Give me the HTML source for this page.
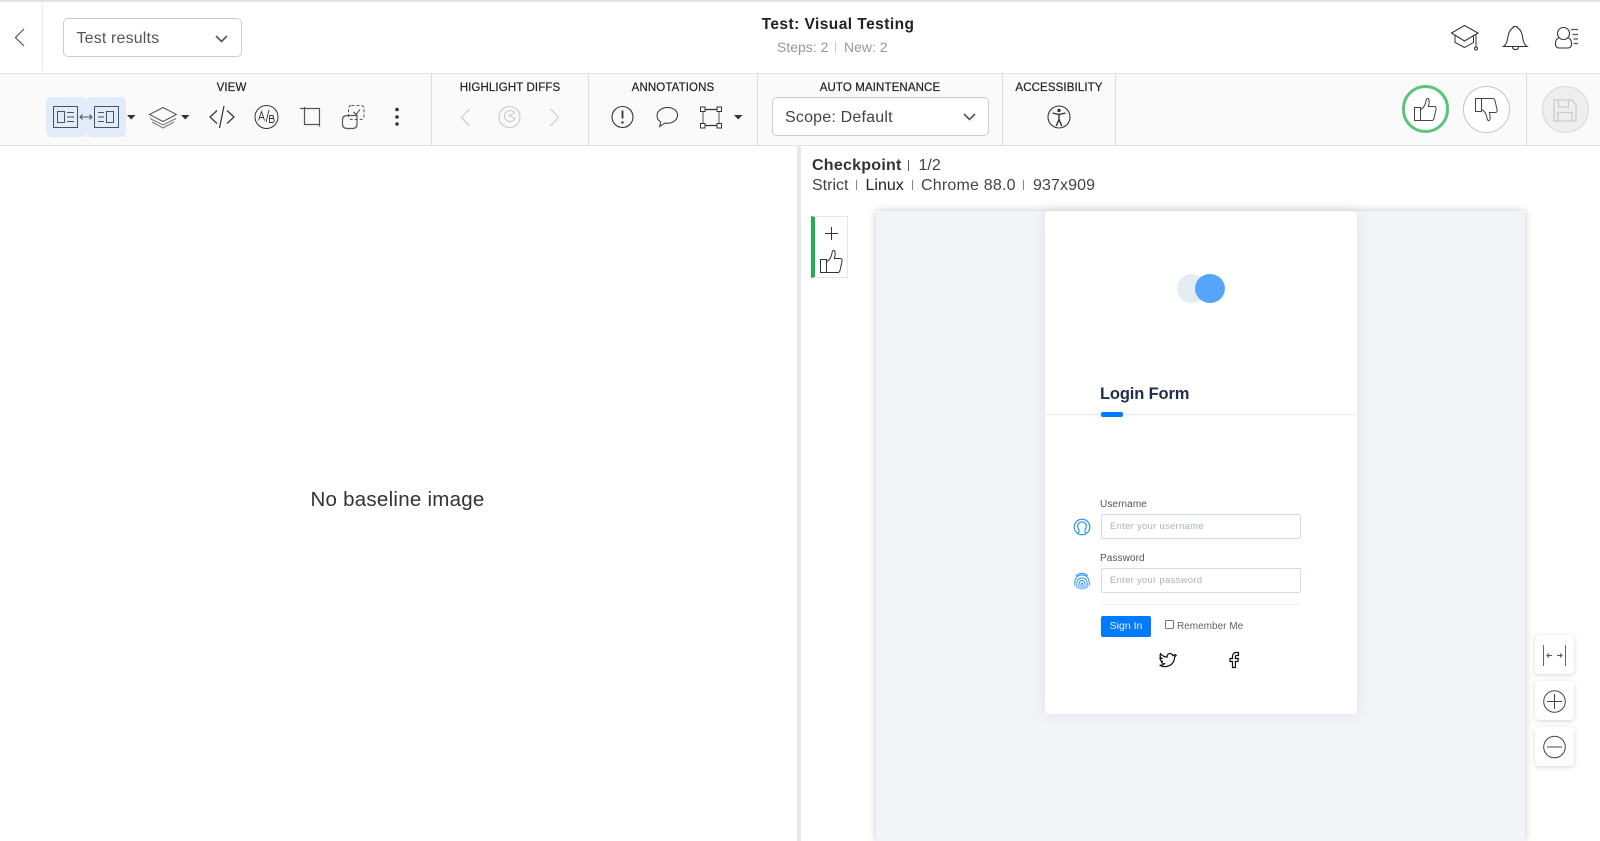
<!DOCTYPE html>
<html>
<head>
<meta charset="utf-8">
<style>
html,body{margin:0;padding:0;width:1600px;height:841px;overflow:hidden;background:#fff;font-family:"Liberation Sans",sans-serif}
.a{position:absolute}
.t{position:absolute;white-space:nowrap;line-height:1}
.c{transform:translateX(-50%)}
.lab{font-size:11.5px;color:#222;top:82.5px;letter-spacing:.12px;-webkit-text-stroke:.2px #222}
svg{position:absolute;left:0;top:0}
.sep{position:absolute;width:1px;background:#ddd}
</style>
</head>
<body>
<!-- chrome backgrounds -->
<div class="a" style="left:0;top:0;width:1600px;height:2px;background:#e3e3e3"></div>
<div class="a" style="left:0;top:73px;width:1600px;height:72px;background:#fafafa;border-top:1px solid #e2e2e2;border-bottom:1px solid #e2e2e2;box-sizing:border-box;height:73px"></div>
<div class="sep" style="left:42px;top:3px;height:68px;background:#eaeaea"></div>
<div class="sep" style="left:431px;top:74px;height:71px"></div>
<div class="sep" style="left:588px;top:74px;height:71px"></div>
<div class="sep" style="left:757px;top:74px;height:71px"></div>
<div class="sep" style="left:1002px;top:74px;height:71px"></div>
<div class="sep" style="left:1115px;top:74px;height:71px"></div>
<div class="sep" style="left:1526px;top:74px;height:71px"></div>

<!-- select -->
<div class="a" style="left:63px;top:18px;width:179px;height:39px;box-sizing:border-box;border:1px solid #ccc;border-radius:5px;background:#fff"></div>
<div class="t" style="left:76.500px;top:30.500px;font-size:16px;color:#555;letter-spacing:.15px">Test results</div>

<!-- title -->
<div class="t c" style="left:838px;top:17px;font-size:15.500px;font-weight:bold;color:#222;letter-spacing:.45px">Test: Visual Testing</div>
<div class="t" style="left:777px;top:40px;font-size:14px;color:#999">Steps: 2</div>
<div class="a" style="left:835px;top:42px;width:1px;height:11px;background:#ccc"></div>
<div class="t" style="left:844px;top:40px;font-size:14px;color:#999">New: 2</div>

<!-- toolbar labels -->
<div class="t c lab" style="left:231.500px">VIEW</div>
<div class="t c lab" style="left:510px">HIGHLIGHT DIFFS</div>
<div class="t c lab" style="left:673px">ANNOTATIONS</div>
<div class="t c lab" style="left:880px">AUTO MAINTENANCE</div>
<div class="t c lab" style="left:1059px">ACCESSIBILITY</div>

<!-- highlight backgrounds -->
<div class="a" style="left:46px;top:97px;width:40px;height:40px;background:#e1ebfa;border-radius:5px"></div>
<div class="a" style="left:86px;top:97px;width:40px;height:40px;background:#e1ebfa;border-radius:5px"></div>

<!-- scope select -->
<div class="a" style="left:772px;top:97px;width:217px;height:39px;box-sizing:border-box;border:1px solid #ccc;border-radius:5px;background:#fff"></div>
<div class="t" style="left:785px;top:109.500px;font-size:16px;color:#444;letter-spacing:.2px">Scope: Default</div>

<!-- buttons -->
<div class="a" style="left:1401.500px;top:85px;width:47.500px;height:47.500px;box-sizing:border-box;border:3.500px solid #5cc47c;border-radius:50%;background:#fff"></div>
<div class="a" style="left:1463px;top:86px;width:47px;height:47px;box-sizing:border-box;border:1.500px solid #c4c4c4;border-radius:50%;background:#fff"></div>
<div class="a" style="left:1541.500px;top:86px;width:47px;height:47px;box-sizing:border-box;border:1.500px solid #d8d8d8;border-radius:50%;background:#eee"></div>

<!-- left pane -->
<div class="a" style="left:797px;top:145px;width:4px;height:696px;background:#e8e8e8"></div>
<div class="t c" style="left:397.500px;top:490px;font-size:20.500px;color:#333;letter-spacing:.25px">No baseline image</div>

<!-- checkpoint info -->
<div class="t" style="left:812px;top:158px;font-size:16px;font-weight:bold;color:#333;letter-spacing:.25px">Checkpoint</div>
<div class="a" style="left:908px;top:160px;width:1px;height:11px;background:#555"></div>
<div class="t" style="left:918.500px;top:158px;font-size:16px;color:#444">1/2</div>
<div class="t" style="left:812px;top:177.500px;font-size:16px;color:#444">Strict</div>
<div class="a" style="left:856px;top:180px;width:1px;height:10px;background:#888"></div>
<div class="t" style="left:865.500px;top:177.500px;font-size:16px;color:#222">Linux</div>
<div class="a" style="left:912px;top:180px;width:1px;height:10px;background:#888"></div>
<div class="t" style="left:921px;top:177.500px;font-size:16px;color:#444;letter-spacing:.2px">Chrome 88.0</div>
<div class="a" style="left:1023px;top:180px;width:1px;height:10px;background:#888"></div>
<div class="t" style="left:1033px;top:177.500px;font-size:16px;color:#444;letter-spacing:.1px">937x909</div>

<!-- side widget -->
<div class="a" style="left:811px;top:216px;width:37px;height:62px;box-sizing:border-box;border:1px solid #e5e5e5;border-left:4.500px solid #1fb350;background:#fff"></div>

<!-- screenshot -->
<div class="a" style="left:876px;top:211px;width:649px;height:630px;background:#f2f4f8;box-shadow:0 0 8px rgba(0,0,0,.22)"></div>
<div class="a" style="left:1045px;top:211px;width:312px;height:503px;background:#fff;border-radius:4px;box-shadow:0 0 14px rgba(60,70,100,.1)"></div>
<div class="a" style="left:1177px;top:274px;width:29px;height:29px;border-radius:50%;background:#e6ecf4"></div>
<div class="a" style="left:1195px;top:274px;width:30px;height:29px;border-radius:50%;background:#55a5fb"></div>
<div class="t" style="left:1100px;top:386px;font-size:16.500px;font-weight:bold;color:#1e3048;letter-spacing:-.15px">Login Form</div>
<div class="a" style="left:1045px;top:414px;width:312px;height:1px;background:#e8ebef"></div>
<div class="a" style="left:1100.500px;top:412px;width:22.500px;height:5px;background:#007bff;border-radius:2px"></div>

<div class="t" style="left:1100px;top:499.500px;font-size:10px;color:#4d5562;letter-spacing:.1px">Username</div>
<div class="a" style="left:1100.500px;top:514px;width:200px;height:25px;box-sizing:border-box;border:1px solid #d3dbe8;border-radius:2px;background:#fff"></div>
<div class="t" style="left:1110px;top:521.500px;font-size:9.500px;color:#aeb2b8;letter-spacing:.27px">Enter your username</div>
<div class="t" style="left:1100px;top:553.500px;font-size:10px;color:#4d5562;letter-spacing:.1px">Password</div>
<div class="a" style="left:1100.500px;top:568px;width:200px;height:25px;box-sizing:border-box;border:1px solid #d3dbe8;border-radius:2px;background:#fff"></div>
<div class="t" style="left:1110px;top:575.500px;font-size:9.500px;color:#aeb2b8;letter-spacing:.27px">Enter your password</div>
<div class="a" style="left:1100.500px;top:604px;width:200px;height:1px;background:#f0f0f2"></div>
<div class="a" style="left:1100.500px;top:616px;width:50.500px;height:20.500px;background:#007bff;border-radius:2px"></div>
<div class="t c" style="left:1126px;top:620.500px;font-size:10.500px;color:#e8f2ff">Sign In</div>
<div class="a" style="left:1165px;top:620px;width:9px;height:9px;box-sizing:border-box;border:1px solid #777;border-radius:1.500px;background:#fff"></div>
<div class="t" style="left:1177px;top:621.500px;font-size:10px;color:#5d6570">Remember Me</div>

<!-- zoom buttons -->
<div class="a" style="left:1535px;top:635px;width:39px;height:39px;background:#fff;border-radius:4px;box-shadow:0 1px 5px rgba(0,0,0,.18)"></div>
<div class="a" style="left:1535px;top:681px;width:39px;height:39px;background:#fff;border-radius:4px;box-shadow:0 1px 5px rgba(0,0,0,.18)"></div>
<div class="a" style="left:1535px;top:727px;width:39px;height:39px;background:#fff;border-radius:4px;box-shadow:0 1px 5px rgba(0,0,0,.18)"></div>

<!-- icons overlay -->
<svg width="1600" height="841" viewBox="0 0 1600 841" fill="none" stroke="#333" stroke-width="1">
<defs>
<g id="th">
<rect x="0.500" y="9.500" width="6" height="13"/>
<path d="M6.500 11.500c3-1 5-5 5.500-8.500 .2-1.800 1-3 2-2.500 1.600.8 1.300 5 .3 8h6c1.400 0 2 1 1.800 2.500l-2 9c-.3 1.300-1 2.500-2.100 2.500H6.500"/>
</g>
</defs>
<!-- back -->
<path d="M24 29 15.500 37.500 24 46" stroke="#555" stroke-width="1.200"/>
<!-- selects arrows -->
<path d="M216 36 221.500 41.500 227 36" stroke="#555" stroke-width="1.600"/>
<path d="M964 114 969.500 119.500 975 114" stroke="#555" stroke-width="1.600"/>

<!-- view icons -->
<g stroke="#4a535d">
<rect x="53.500" y="106.500" width="24" height="21"/>
<rect x="57.500" y="111.500" width="7" height="11"/>
<path d="M67 112.500h7M67 117h7M67 121.500h7"/>
<rect x="94.500" y="106.500" width="24" height="21"/>
<rect x="106.500" y="111.500" width="7" height="11"/>
<path d="M98 112.500h6M98 117h6M98 121.500h6"/>
<path d="M80 117h12M82.500 114.500 80 117l2.500 2.500M89.500 114.500 92 117l-2.500 2.500"/>
</g>
<g fill="#333" stroke="none">
<path d="M127 115h8.500l-4.250 4.500z"/>
<path d="M181 115h8.500l-4.250 4.500z"/>
<path d="M734 115h8.500l-4.250 4.500z"/>
<circle cx="397" cy="109.500" r="1.800"/><circle cx="397" cy="117" r="1.800"/><circle cx="397" cy="124" r="1.800"/>
</g>
<path d="M163 107.500 176.500 114.500 163 121.500 149.500 114.500Z" stroke="#555"/>
<path d="M150 118.500 163 125 176 118.500M152 122 163 128 174 122" stroke="#777"/>
<path d="M217 110.500 210 117l7 6.500M227 110.500 234 117l-7 6.500M224 106 219.500 128" stroke-width="1.200"/>
<circle cx="266.500" cy="117" r="11.500"/>
<path d="M258.500 120.500 261.500 111.500 264.500 120.500M259.500 117.500h4M266 122 269 110" stroke-width=".9"/>
<path d="M269.500 115.500h2.500c2 0 2 3 0 3h-2.500v-3M269.500 118.500h3c2.300 0 2.300 4 0 4h-3z" stroke-width=".9"/>
<path d="M300 108.500h4.500M304.500 107v17.500H320M304.500 108.500H319.500V124.500M319.500 124.500v2" stroke="#555" stroke-width="1.200"/>
<path d="M356 115.500h-8.500c-3 0-5 1.500-5 4.500v4c0 3 2 4.500 5 4.500h5c3 0 4.500-1.500 4.500-4.500v-8.500z" stroke="#555" stroke-width="1.200"/>
<rect x="348.500" y="105.500" width="15.500" height="14" rx="3" stroke="#555" stroke-dasharray="3 2"/>
<path d="M353.500 112 356 114.500 360 109.500"/>

<!-- highlight diffs -->
<g stroke="#c9c9c9" stroke-width="1.100">
<path d="M469.500 109 461.500 117.500 469.500 126M550.500 109 558.500 117.500 550.500 126"/>
<circle cx="509.500" cy="117" r="10.500"/>
<path d="M515 112.500c-2.500-2.500-8-2.500-10 1-2 4 1 8 5 8 2.500 0 4-1 5-3L509 115.500 515 112.500"/>
</g>
<!-- annotations -->
<circle cx="622.500" cy="117" r="10.500" stroke-width="1.100"/>
<path d="M622.500 110.500v8" stroke-width="1.800"/>
<circle cx="622.500" cy="122.500" r="1.200" fill="#333" stroke="none"/>
<path d="M667.500 107.500c-6 0-10.500 3.700-10.500 8.300 0 2.700 1.500 4.800 3.700 6.200l-1 4.500 5-3.400c.9.200 1.800.200 2.800.200 5.500 0 10-3.700 10-8.200 0-4.600-4.500-7.600-10-7.600z"/>
<path d="M703 109.500h16M703 125.500h16" stroke-width="1.200"/>
<path d="M703 109.500v16M719 109.500v16" stroke="#555"/>
<g fill="#fff" stroke="#333">
<rect x="700.500" y="107" width="4.500" height="4.500"/><rect x="717" y="107" width="4.500" height="4.500"/>
<rect x="700.500" y="123.500" width="4.500" height="4.500"/><rect x="717" y="123.500" width="4.500" height="4.500"/>
</g>
<!-- accessibility -->
<circle cx="1059" cy="117" r="11" stroke-width="1.100"/>
<circle cx="1059" cy="110.500" r="1.700" fill="#333" stroke="none"/>
<path d="M1052.500 113 1059 114.500 1065.500 113M1059 114.500v5M1059 119.500l-2.800 6.500M1059 119.500l2.800 6.500" stroke-width="1.400"/>

<!-- header right -->
<path d="M1464.500 25.500 1478 33 1464.500 41 1451.500 33Z" stroke-width="1.100"/>
<path d="M1455 35.500v7l9.500 5 9-5v-7M1476 34v13" stroke-width="1"/>
<circle cx="1476" cy="48.500" r="1.500"/>
<path d="M1504 46.500h23c-3-2-4-5.500-4.500-10-.5-4.500-3-8-5.500-9v-1h-3.500v1c-2.500 1-5 4.500-5.500 9-.5 4.500-1.500 8-4.500 10zM1512.500 47c.5 3.500 5.500 3.500 6 0" stroke-width="1.100"/>
<circle cx="1563.500" cy="33.500" r="6" stroke-width="1.100"/>
<path d="M1558.500 38c-2 1-3 2.500-3 5v1.500c0 2 1.500 3.500 3.500 3.500h9c2 0 3.500-1.500 3.500-3.500V43c0-2-1-4-3-5" stroke-width="1.100"/>
<path d="M1571 29.500h7M1572.500 34.500h5.500M1573.500 39h4.500M1573.500 43.500h4.500" stroke="#555" stroke-width="1.200"/>

<!-- thumbs -->
<use href="#th" x="1414" y="98" stroke="#444"/>
<g transform="translate(1475 121) scale(1 -1)"><use href="#th" stroke="#444"/></g>
<use href="#th" x="820" y="250"/>
<path d="M831.500 227v13M825 233.500h13" stroke-width="1"/>

<!-- save -->
<path d="M1554 100h17.500l4.500 4.500V121h-22zM1558.500 100v7h10v-7M1558 121v-8.500h14V121" stroke="#ccc" stroke-width="1.300"/>

<!-- login icons -->
<circle cx="1082" cy="527" r="7.800" stroke="#1b8cf5" stroke-width="1.100"/>
<path d="M1078 533c1.500-1 1.500-2.500.5-4-2-3-.5-7 3.500-7s5.500 4 3.500 7c-1 1.500-1 3 .5 4" stroke="#1b8cf5" stroke-width="1.100"/>
<g stroke="#1b8cf5" stroke-width=".9">
<path d="M1075 586c-.8-5 .5-11 7-11s7.800 6 7 11"/>
<path d="M1077 588c-.5-5-.5-10 5-10s5.500 5 5 10"/>
<path d="M1079 589c-.2-4-.5-8.500 3-8.500s3.200 4.500 3 8.500"/>
<path d="M1081 589.500c0-3-.3-6.500 1-6.500s1 3.500 1 6.500"/>
<path d="M1076 576c3-3.500 9-3.500 12 0"/>
</g>
<path d="M1175 654.500c-1 .9-1.800 1.100-2.400 1.100 0-1-.9-2.100-2.600-2.100-2 0-3.300 1.900-2.800 3.500-2.600 0-5-1.200-6.600-3.300-1 1.700-.4 3.800 1 4.700-.6 0-1.200-.2-1.600-.4 0 1.700 1.100 3 2.800 3.500-.5.100-1 .1-1.500 0 .4 1.300 1.700 2.300 3.100 2.300-1.300 1-3 1.600-4.700 1.400 5.500 3.200 14.500 1 15-8.400.7-.4 1.200-1 1.500-1.600z" stroke="#111" stroke-width="1.200"/>
<path d="M1232.500 667.500v-6h-2.500v-3h2.500v-2c0-2.500 1.500-4 3.800-4h2.200v3h-1.800c-1 0-1.300.4-1.300 1.300v1.700h3l-.5 3h-2.500v6z" stroke="#111" stroke-width="1.200"/>

<!-- zoom button icons -->
<path d="M1543.500 645v21M1565.500 645v21" stroke="#666" stroke-width="1"/>
<path d="M1547 655.500h5M1549 653.500l-2 2 2 2M1557 655.500h5M1560 653.500l2 2-2 2" stroke="#555" stroke-width="1"/>
<circle cx="1554.500" cy="701.500" r="10.800" stroke="#444"/>
<path d="M1554.500 694v15M1547 701.500h15" stroke="#444"/>
<circle cx="1554.500" cy="747" r="10.800" stroke="#444"/>
<path d="M1547 747h15" stroke="#444"/>
</svg>
</body>
</html>
